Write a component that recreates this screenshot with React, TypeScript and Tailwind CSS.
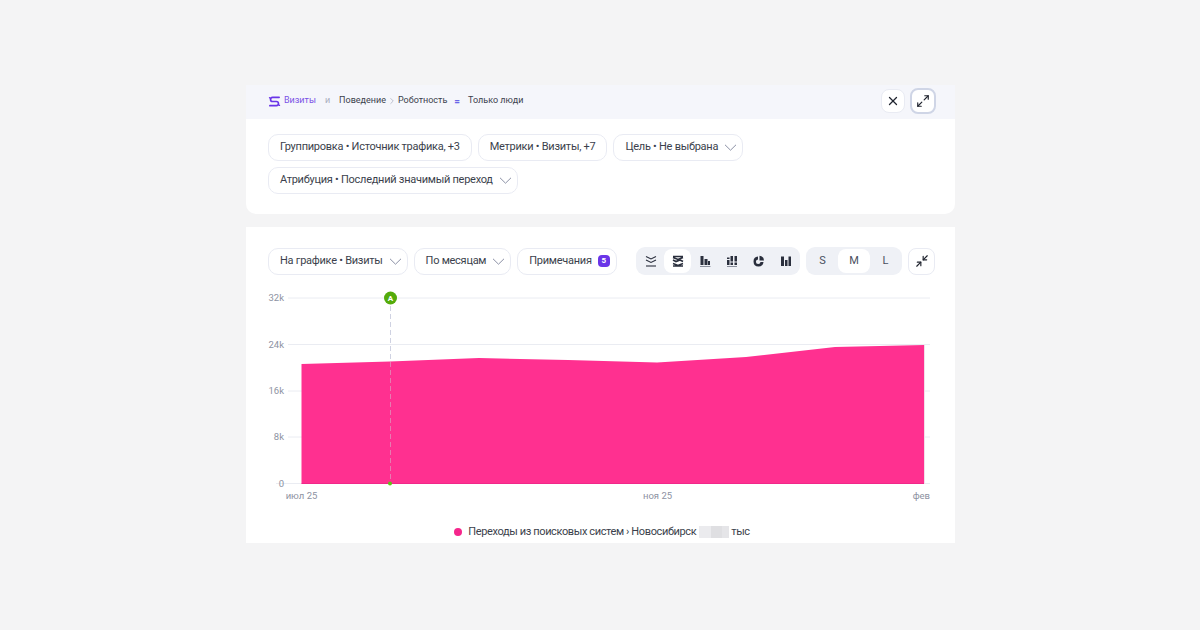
import { ChevronRight, Maximize2, Minimize2, X } from 'lucide-react';

const font = 'font-["Roboto","Liberation_Sans",sans-serif]';

function Chevron() {
  return (
    <svg viewBox="0 0 13 7" className="h-[7px] w-[13px] text-[#8b90a5]" fill="none" stroke="currentColor" strokeWidth="1">
      <path d="M1 .8l5.500 5.400L12 .8" />
    </svg>
  );
}

function Pill({ label, chevron = true }: { label: string; chevron?: boolean }) {
  return (
    <div className={`flex h-[27px] items-center gap-[6px] rounded-[10px] border border-[#e9ebf3] bg-white pl-[11px] text-[11px] tracking-[-0.26px] text-[#3b3f4c] ${chevron ? 'pr-[5px]' : 'pr-[11px]'}`}>
      <span className="whitespace-nowrap">{label}</span>
      {chevron && <Chevron />}
    </div>
  );
}

function StrokeIcon({ children }: { children: React.ReactNode }) {
  return (
    <svg viewBox="0 0 14 14" className="h-[14px] w-[14px] text-[#2a2f3d]" fill="none" stroke="currentColor" strokeWidth="1.3">
      {children}
    </svg>
  );
}

const chartIcons = [
  <StrokeIcon key="line">
    <path d="M2 2.500l5 2.500 5-2.500M2 6l5 2.500L12 6" strokeWidth="1.100" />
    <path d="M2 12h10" strokeWidth="1.100" />
  </StrokeIcon>,
  <StrokeIcon key="area">
    <path d="M2 2.500h10M2 3.500l5 2 5-2" strokeWidth="1.500" />
    <path d="M2 6l3 1.500L9 6l3 1.500" strokeWidth="1.700" />
    <path d="M2 9.500l5 2 5-2M2 12h10" strokeWidth="1.500" />
  </StrokeIcon>,
  <StrokeIcon key="bars">
    <path d="M2.500 2h3v9h-3zM6.500 5h3v6h-3zM10 7h2v4h-2z" fill="currentColor" stroke="none" />
    <path d="M2 12.500h10.500" strokeWidth="1" stroke="#8a8f9c" />
  </StrokeIcon>,
  <StrokeIcon key="stack">
    <path d="M2 3.500h2.500v1.500H2zM2 6h2.500v5H2zM5.500 2H8v5.500H5.500zM5.500 8.500H8V11H5.500zM9.500 2H12v5.500H9.500zM9.500 8.500H12V11H9.500z" fill="currentColor" stroke="none" />
    <path d="M2 12.500h10" strokeWidth="1" stroke="#8a8f9c" />
  </StrokeIcon>,
  <StrokeIcon key="pie">
    <path d="M6 2.500a5 5 0 1 0 5.500 5.500H8.500A2.300 2.300 0 1 1 6 5.500z" fill="currentColor" stroke="none" />
    <path d="M7.500 1.800A5 5 0 0 1 12 6.500H7.500z" fill="currentColor" stroke="none" />
  </StrokeIcon>,
  <StrokeIcon key="columns">
    <path d="M2 2.500h3V12H2zM6 6h2.500v6H6zM9.500 2.500H12V12H9.500z" fill="currentColor" stroke="none" />
  </StrokeIcon>,
];

const gridY = [298, 344.5, 391, 437, 483.5];
const yLabels = ['32k', '24k', '16k', '8k', '0'];
const areaPoints =
  '301.5,364 390,361.5 479,358 568,360 657,362.5 746,357 835,347 924,345 924,483.5 301.5,483.5';

function Chart() {
  return (
    <svg viewBox="246 285 709 225" className="h-[225px] w-[709px]">
      {gridY.map((y, i) => (
        <line key={y} x1={i === 4 ? 276 : 288} x2="930" y1={y} y2={y} stroke="#eaecf2" strokeWidth="1" />
      ))}
      {yLabels.map((label, i) => (
        <text key={label} x="284" y={gridY[i] + 3} textAnchor="end" fontSize="9.500" fill="#8d92a2">
          {label}
        </text>
      ))}
      <polygon points={areaPoints} fill="#ff3090" />
      <line x1="301.5" x2="924" y1="483.5" y2="483.5" stroke="#f0288a" strokeWidth="1" />
      <line x1="924.5" x2="924.5" y1="345" y2="484" stroke="#f1dfe9" strokeWidth="1" />
      <line x1="390.5" x2="390.5" y1="306" y2="483" stroke="#cfd2e2" strokeWidth="1" strokeDasharray="5 3" />
      <line x1="390.500" x2="390.500" y1="362" y2="483" stroke="#e87ab0" strokeWidth="1" strokeDasharray="5 3" />
      <circle cx="390.500" cy="298" r="6.500" fill="#54ab0b" />
      <text x="390.500" y="301" textAnchor="middle" fontSize="8" fontWeight="700" fill="#fff">
        A
      </text>
      <circle cx="390" cy="483.500" r="2" fill="#5cc414" />
      <text x="301.500" y="499" textAnchor="middle" fontSize="9.500" fill="#8d92a2">
        июл 25
      </text>
      <text x="657.500" y="499" textAnchor="middle" fontSize="9.500" fill="#8d92a2">
        ноя 25
      </text>
      <text x="930" y="499" textAnchor="end" fontSize="9.500" fill="#8d92a2">
        фев
      </text>
    </svg>
  );
}

export default function App() {
  return (
    <div className={`flex h-[630px] w-[1200px] flex-col items-center overflow-hidden bg-[#f4f4f5] pt-[85px] ${font}`}>
      <div className="mr-[-1px] flex w-[709px] flex-col gap-[13px]">
        <section className="h-[129px] overflow-hidden rounded-b-[10px] bg-white">
          <header className="flex h-[34px] items-center bg-[#f5f6fb] pb-[2px] pl-[22px] pr-[19px] text-[9px] text-[#3b3f4c]">
            <svg viewBox="0 0 14 14" className="mr-[3px] h-[13px] w-[13px]" fill="none" stroke="#6a35e8" strokeWidth="1.800">
              <path d="M12 2.500H5a2.250 2.250 0 0 0 0 4.500h4a2.250 2.250 0 0 1 0 4.500H2" strokeLinecap="round" />
              <circle cx="1.800" cy="3" r="0.900" fill="#6a35e8" stroke="none" />
              <circle cx="12.200" cy="11" r="0.900" fill="#6a35e8" stroke="none" />
            </svg>
            <span className="text-[#7a52e6]">Визиты</span>
            <span className="ml-[9px] text-[#a9adbd]">и</span>
            <span className="ml-[9px]">Поведение</span>
            <ChevronRight className="mx-[1px] h-[10px] w-[10px] text-[#9aa0b4]" strokeWidth={1.5} />
            <span>Роботность</span>
            <span className="ml-[7px] text-[10px] font-bold text-[#6a66e8]">=</span>
            <span className="ml-[8px]">Только люди</span>
            <div className="ml-auto flex items-center gap-[5px]">
              <button className="flex h-[24px] w-[24px] items-center justify-center rounded-[8px] border border-[#e9ebf3] bg-white">
                <X className="h-[14px] w-[14px] text-[#20242f]" strokeWidth={2.25} />
              </button>
              <button className="flex h-[26px] w-[26px] items-center justify-center rounded-[8px] border-2 border-[#cfd5e6] bg-white">
                <Maximize2 className="h-[14px] w-[14px] text-[#20242f]" strokeWidth={2} />
              </button>
            </div>
          </header>
          <div className="flex flex-wrap gap-x-[6px] gap-y-[6px] pl-[22px] pr-[200px] pt-[15px]">
            <Pill label="Группировка • Источник трафика, +3" chevron={false} />
            <Pill label="Метрики • Визиты, +7" chevron={false} />
            <Pill label="Цель • Не выбрана" />
            <Pill label="Атрибуция • Последний значимый переход" />
          </div>
        </section>

        <section className="h-[316px] overflow-hidden bg-white">
          <div className="mt-[20px] flex h-[28px] items-center pl-[22px] pr-[20px]">
            <div className="flex gap-[6px]">
              <Pill label="На графике • Визиты" />
              <Pill label="По месяцам" />
              <div className="flex h-[27px] items-center gap-[6px] rounded-[10px] border border-[#e9ebf3] bg-white pl-[11px] pr-[6px] text-[11px] tracking-[-0.26px] text-[#3b3f4c]">
                <span>Примечания</span>
                <span className="flex h-3 w-3 items-center justify-center rounded-[4px] bg-[#6a35e8] text-[8px] font-bold text-white">
                  5
                </span>
              </div>
            </div>
            <div className="ml-auto flex items-center gap-[6px]">
              <div className="flex h-[28px] items-center rounded-[9px] bg-[#eff1f6] px-[1px]">
                {chartIcons.map((icon, i) => (
                  <div
                    key={i}
                    className={`flex h-[24px] w-[27px] items-center justify-center rounded-[8px] ${i === 1 ? 'bg-white' : ''}`}
                  >
                    {icon}
                  </div>
                ))}
              </div>
              <div className="flex h-[28px] items-center rounded-[9px] bg-[#eff1f6] px-[1px] text-[11px] text-[#4a4f5e]">
                <div className="flex h-[24px] w-[31px] items-center justify-center">S</div>
                <div className="flex h-[24px] w-[32px] items-center justify-center rounded-[8px] bg-white">M</div>
                <div className="flex h-[24px] w-[31px] items-center justify-center">L</div>
              </div>
              <button className="flex h-[27px] w-[27px] items-center justify-center rounded-[8px] border border-[#e9ebf3] bg-white">
                <Minimize2 className="h-[14px] w-[14px] text-[#20242f]" strokeWidth={2} />
              </button>
            </div>
          </div>
          <div className="mt-[10px]">
            <Chart />
          </div>
          <div className="mt-[14px] flex items-center justify-center pl-[3px] text-[11px] tracking-[-0.38px] text-[#3b3f4c]">
            <span className="mr-[6px] h-2 w-2 rounded-full bg-[#f5268c]" />
            <span>Переходы из поисковых систем › Новосибирск</span>
            <span className="ml-[3px] flex h-[12px] w-[30px]">
              <span className="w-[12px] bg-[#ebebee]" />
              <span className="w-[11px] bg-[#dfdfe2]" />
              <span className="w-[7px] bg-[#e5e5e8]" />
            </span>
            <span className="ml-[2px]">тыс</span>
          </div>
        </section>
      </div>
    </div>
  );
}
